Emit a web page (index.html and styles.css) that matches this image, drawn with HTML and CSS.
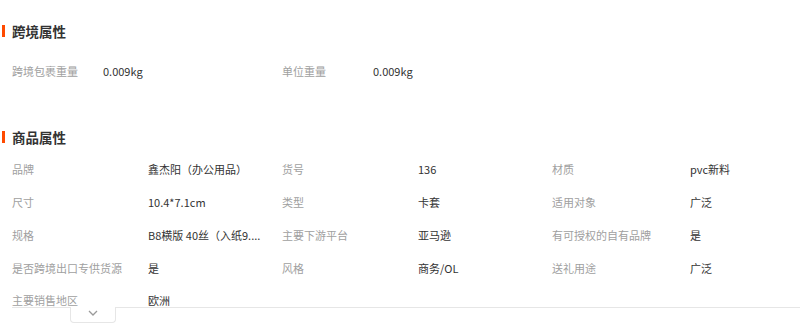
FILE: index.html
```html
<!DOCTYPE html>
<html lang="zh-CN">
<head>
<meta charset="utf-8">
<title>属性</title>
<link rel="stylesheet" href="styles.css">
</head>
<body>
<div class="page">
  <section class="sec sec-cross">
    <h2 class="title">跨境属性</h2>
    <div class="grid grid-cross">
      <div class="lbl">跨境包裹重量</div><div class="val">0.009kg</div>
      <div class="lbl">单位重量</div><div class="val">0.009kg</div>
    </div>
  </section>
  <section class="sec sec-prod">
    <h2 class="title">商品属性</h2>
    <div class="grid grid-prod">
      <div class="lbl">品牌</div><div class="val">鑫杰阳（办公用品）</div>
      <div class="lbl">货号</div><div class="val">136</div>
      <div class="lbl">材质</div><div class="val">pvc新料</div>
      <div class="lbl">尺寸</div><div class="val">10.4*7.1cm</div>
      <div class="lbl">类型</div><div class="val">卡套</div>
      <div class="lbl">适用对象</div><div class="val">广泛</div>
      <div class="lbl">规格</div><div class="val">B8横版 40丝（入纸9....</div>
      <div class="lbl">主要下游平台</div><div class="val">亚马逊</div>
      <div class="lbl">有可授权的自有品牌</div><div class="val">是</div>
      <div class="lbl">是否跨境出口专供货源</div><div class="val">是</div>
      <div class="lbl">风格</div><div class="val">商务/OL</div>
      <div class="lbl">送礼用途</div><div class="val">广泛</div>
      <div class="lbl last">主要销售地区</div><div class="val last">欧洲</div>
    </div>
    <div class="fold">
      <button class="tab" type="button" aria-label="展开">
        <svg width="10" height="6" viewBox="0 0 10 6"><path d="M1 1l4 4 4-4" fill="none" stroke="#9a9a9a" stroke-width="1.3"/></svg>
      </button>
    </div>
  </section>
</div>
</body>
</html>
```

FILE: styles.css
```css
* { box-sizing: border-box; }
html, body { margin: 0; padding: 0; background: #fff; }
body {
  font-family: "Noto Sans CJK SC", "Noto Sans", sans-serif;
  width: 800px;
  height: 325px;
  overflow: hidden;
}
.page { padding-left: 12px; }
.sec-cross { padding-top: 21px; }
.sec-prod { margin-top: 40px; }
.title {
  position: relative;
  margin: 0;
  height: 20px;
  line-height: 20px;
  font-size: 13.5px;
  font-weight: 700;
  color: #333;
}
.title::before {
  content: "";
  position: absolute;
  left: -10px;
  top: 4px;
  width: 3px;
  height: 12px;
  background: #ff4a00;
}
.sec-cross .title { margin-bottom: 13px; }
.sec-prod .title { margin-bottom: 5px; }
.grid {
  display: grid;
  grid-auto-rows: 33px;
  align-items: center;
  font-size: 11px;
}
.grid-cross { grid-template-columns: 91px 179px 91px 200px; }
.grid-prod {
  grid-template-columns: 136px 134px 136px 134px 138px 134px;
  grid-template-rows: repeat(4, 33px) 23px;
}
.lbl { color: #a0a0a0; white-space: nowrap; }
.val {
  color: #333;
  white-space: nowrap;
  overflow: hidden;
  padding-right: 14px;
}
.last { align-self: end; line-height: 14px; }
.fold {
  display: flex;
  border-top: 1px solid #e6e6e6;
}
.tab {
  margin: -1px 0 0 58px;
  width: 46px;
  height: 16px;
  padding: 0 0 4px;
  background: #fff;
  border: 1px solid #e6e6e6;
  border-top: none;
  border-radius: 0 0 4px 4px;
  display: flex;
  align-items: center;
  justify-content: center;
}
```
